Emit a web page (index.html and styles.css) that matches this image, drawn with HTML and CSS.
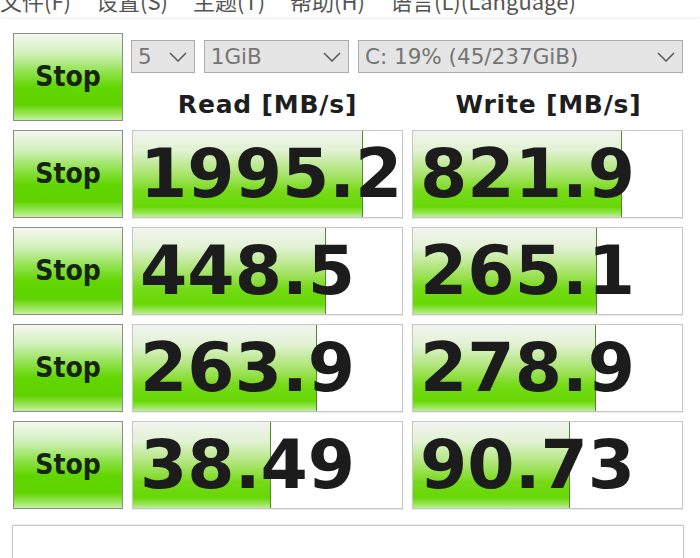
FILE: index.html
```html
<!DOCTYPE html>
<html lang="zh-CN">
<head>
    <meta charset="UTF-8">
    <title>CrystalDiskMark</title>
    <link rel="stylesheet" href="styles.css">
</head>
<body>
    <div class="menu">
        <span>文件(F)</span>
        <span>设置(S)</span>
        <span>主题(T)</span>
        <span>帮助(H)</span>
        <span>语言(L)(Language)</span>
    </div>

    <div class="board">
        <div class="stop">Stop</div>
        <div class="head">
            <div class="combos">
                <div class="combo c-count">5 <svg viewBox="0 0 18 10"><path d="M1 1 L9 9 L17 1"/></svg></div>
                <div class="combo c-size">1GiB <svg viewBox="0 0 18 10"><path d="M1 1 L9 9 L17 1"/></svg></div>
                <div class="combo c-drive">C: 19% (45/237GiB) <svg viewBox="0 0 18 10"><path d="M1 1 L9 9 L17 1"/></svg></div>
            </div>
            <div class="titles">
                <div>Read [MB/s]</div>
                <div>Write [MB/s]</div>
            </div>
        </div>

        <div class="stop">Stop</div>
        <div class="cell"><div class="bar" style="width: 85%"></div><span>1995.2</span></div>
        <div class="cell"><div class="bar" style="width: 77.5%"></div><span>821.9</span></div>

        <div class="stop">Stop</div>
        <div class="cell"><div class="bar" style="width: 71.5%"></div><span>448.5</span></div>
        <div class="cell"><div class="bar" style="width: 68%"></div><span>265.1</span></div>

        <div class="stop">Stop</div>
        <div class="cell"><div class="bar" style="width: 68%"></div><span>263.9</span></div>
        <div class="cell"><div class="bar" style="width: 67.5%"></div><span>278.9</span></div>

        <div class="stop">Stop</div>
        <div class="cell"><div class="bar" style="width: 51%"></div><span>38.49</span></div>
        <div class="cell"><div class="bar" style="width: 58%"></div><span>90.73</span></div>
    </div>

    <div class="comment"></div>
</body>
</html>
```

FILE: styles.css
```css
body {
    margin: 0;
    background: #fff;
    font-family: "DejaVu Sans", Tahoma, sans-serif;
    color: #1e1e1e;
    overflow: hidden;
}
.menu {
    height: 17px;
    line-height: 0;
    font-family: "Noto Sans CJK SC", "Noto Sans", sans-serif;
    font-size: 22px;
    color: #555;
    white-space: nowrap;
    box-shadow: 0 2px 3px rgba(0,0,0,0.06);
    display: flex;
    gap: 25px;
}
.board {
    display: grid;
    grid-template-columns: 110px 271px 271px;
    grid-auto-rows: 88px;
    column-gap: 9px;
    row-gap: 9px;
    margin: 16px 0 0 13px;
}
.stop {
    box-sizing: border-box;
    border: 1px solid #8c8c8c;
    background: linear-gradient(to bottom, #f4f8f1 0%, #d2f0bd 22%, #8ee24a 45%, #62d600 62%, #5fd300 82%, #9ae65a 93%, #c6f0a2 100%);
    display: flex;
    align-items: center;
    justify-content: center;
    font-weight: bold;
    font-size: 28px;
    font-stretch: condensed;
    color: #17240f;
    padding-bottom: 2px;
}
.head {
    grid-column: 2 / 4;
    display: flex;
    flex-direction: column;
}
.combos {
    display: flex;
    gap: 9px;
    margin: 7px 0 0 -1px;
}
.combo {
    box-sizing: border-box;
    height: 33px;
    background: #e5e5e5;
    border: 1px solid #acacac;
    color: #747474;
    font-size: 21.5px;
    display: flex;
    align-items: center;
    justify-content: space-between;
    padding: 0 7px 0 6px;
}
.combo svg {
    width: 18px;
    height: 10px;
    fill: none;
    stroke: #5c5c5c;
    stroke-width: 1.6;
}
.c-count { width: 64px; }
.c-size { width: 146px; }
.c-drive { width: 327px; }
.titles {
    display: grid;
    grid-template-columns: 271px 271px;
    column-gap: 10px;
    margin-top: 17px;
    font-weight: bold;
    font-size: 25px;
    letter-spacing: 0.8px;
    text-align: center;
    color: #1e1e1e;
}
.cell {
    position: relative;
    box-sizing: border-box;
    border: 1px solid #c6c6c6;
    box-shadow: 0 1px 1px rgba(0,0,0,0.08);
    background: #fff;
    display: flex;
    align-items: center;
    overflow: visible;
}
.bar {
    position: absolute;
    left: 0;
    top: 0;
    bottom: 0;
    border-right: 1px solid #4e8a2a;
    background: linear-gradient(to bottom, #f2f4f0 0%, #e2f2d4 22%, #aee576 48%, #76da18 70%, #66d804 88%, #9ce65e 96%, #c0ee98 100%);
}
.cell span {
    position: relative;
    font-weight: bold;
    font-size: 68px;
    line-height: 1;
    padding-left: 7px;
    color: #1c1c1c;
    white-space: nowrap;
}
.comment {
    box-sizing: border-box;
    height: 40px;
    margin: 16px 0 0 12px;
    width: 672px;
    border: 1px solid #c6c6c6;
    box-shadow: 0 -1px 2px rgba(0,0,0,0.08);
}
```
